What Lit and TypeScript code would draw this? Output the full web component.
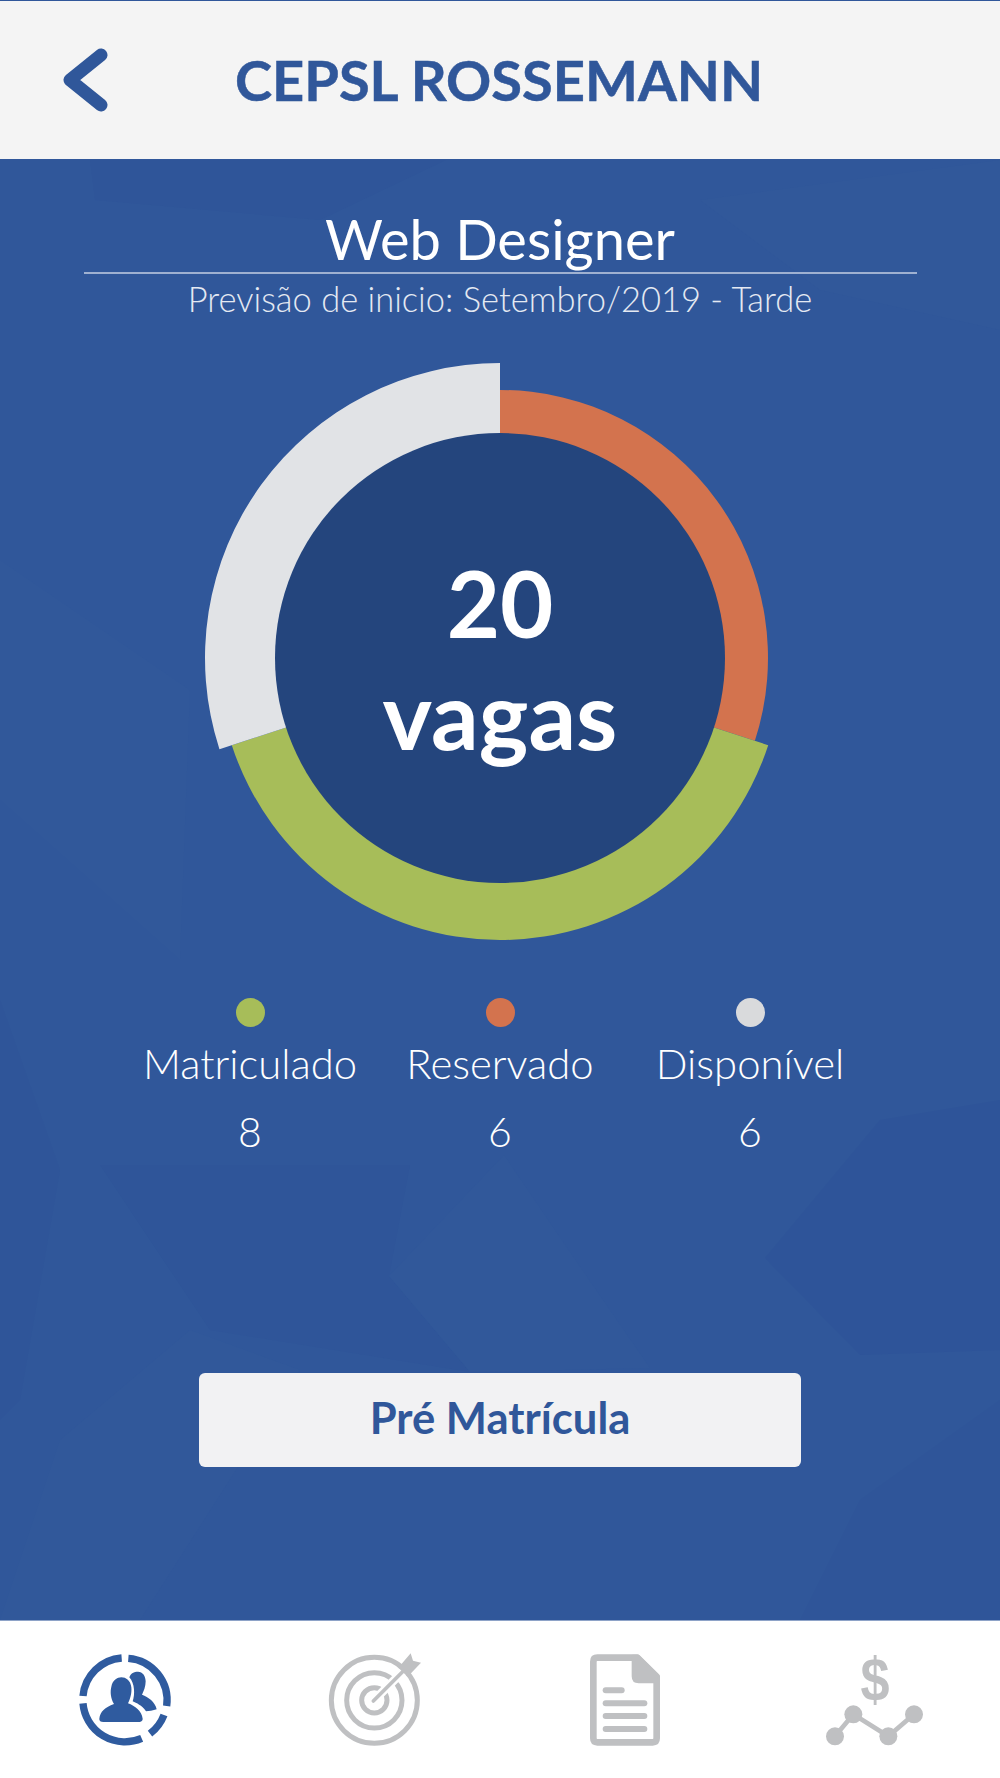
import {LitElement, html, css, svg} from 'lit';
import {customElement, state} from 'lit/decorators.js';

interface Slice {
  label: string;
  value: number;
  color: string;
  dot: string;
  radius: number;
}

const CX = 300;
const CY = 300;

// Clockwise ring slice from the top; angles in degrees, inner radius shared by all.
function slicePath(from: number, to: number, outer: number, inner: number): string {
  const pt = (deg: number, r: number) => {
    const a = ((deg - 90) * Math.PI) / 180;
    return `${(CX + r * Math.cos(a)).toFixed(2)} ${(CY + r * Math.sin(a)).toFixed(2)}`;
  };
  const large = to - from > 180 ? 1 : 0;
  return `M${pt(from, outer)} A${outer} ${outer} 0 ${large} 1 ${pt(to, outer)} L${pt(to, inner)} A${inner} ${inner} 0 ${large} 0 ${pt(from, inner)} Z`;
}

// Faint low-poly facets behind the main panel.
const backdrop: [string, string][] = [
  ['90,160 446,160 320,220 95,200', '#2f5599'],
  ['700,200 1000,160 1000,330 820,290', '#31589a'],
  ['0,560 190,690 180,960 0,800', '#31589a'],
  ['100,1165 410,1165 389,1276 470,1372 210,1330', '#2f5599'],
  ['504,1155 574,1258 650,1368 470,1372 389,1276', '#31589a'],
  ['765,1258 860,1355 1000,1350 1000,1100 880,1120', '#2e5499'],
  ['60,1440 190,1330 300,1370 140,1620 0,1620', '#31589a'],
  ['860,1500 1000,1400 1000,1620 800,1620', '#2f5599'],
  ['0,1000 60,1170 20,1400 0,1420', '#2f5599'],
];

@customElement('app-root')
export class AppRoot extends LitElement {
  static override styles = css`
    :host {
      display: block;
      width: 1000px;
      height: 1778px;
      font-family: Lato, 'Open Sans', sans-serif;
      color: #fff;
      background: #fff;
    }

    .page {
      display: flex;
      flex-direction: column;
      height: 100%;
    }

    header {
      box-sizing: border-box;
      height: 159px;
      flex: none;
      display: flex;
      align-items: center;
      padding-left: 60px;
      background: #f4f4f4;
      border-top: 1px solid #30579a;
      color: #30579a;
    }

    .back {
      width: 50px;
      height: 70px;
      flex: none;
    }

    header h1 {
      margin: 0 0 0 125px;
      font-size: 56px;
      font-weight: 700;
      line-height: 1;
      -webkit-text-stroke: 0.5px #30579a;
    }

    main {
      position: relative;
      flex: 1;
      display: flex;
      flex-direction: column;
      align-items: center;
      background: #30579a;
      overflow: hidden;
    }

    .backdrop {
      position: absolute;
      left: 0;
      top: -159px;
      width: 1000px;
      height: 1620px;
    }

    .heading {
      position: relative;
      width: 833px;
      margin-top: 47px;
      text-align: center;
    }

    .heading h2 {
      margin: 0;
      font-size: 56px;
      font-weight: 400;
      line-height: 66px;
      border-bottom: 2px solid #9fb1d1;
    }

    .heading p {
      margin: 3px 0 0;
      font-size: 34.5px;
      font-weight: 300;
      line-height: 44px;
      color: #e4e9f2;
    }

    .chart {
      position: relative;
      width: 600px;
      height: 600px;
      margin-top: 37px;
    }

    .chart svg {
      display: block;
    }

    .total {
      position: absolute;
      inset: 0;
      display: flex;
      flex-direction: column;
      align-items: center;
      justify-content: center;
      font-size: 92px;
      font-weight: 700;
      line-height: 111px;
    }

    .total .unit {
      font-size: 94px;
    }

    .legend {
      position: relative;
      display: grid;
      grid-template-columns: repeat(3, 250px);
      margin-top: 40px;
      text-align: center;
    }

    .legend .item {
      display: flex;
      flex-direction: column;
      align-items: center;
    }

    .dot {
      width: 29px;
      height: 29px;
      border-radius: 50%;
    }

    .label {
      margin-top: 8px;
      font-size: 41.8px;
      font-weight: 300;
      line-height: 56px;
    }

    .count {
      margin-top: 13px;
      font-size: 41px;
      font-weight: 300;
      line-height: 56px;
    }

    .enroll {
      position: relative;
      box-sizing: border-box;
      width: 602px;
      height: 94px;
      margin-top: 213px;
      padding: 0 0 6px;
      border: none;
      border-radius: 6px;
      background: #f2f2f3;
      color: #30579a;
      font-family: inherit;
      font-size: 43.6px;
      font-weight: 700;
    }

    nav {
      box-sizing: border-box;
      height: 158px;
      flex: none;
      display: grid;
      grid-template-columns: repeat(4, 1fr);
      background: #fff;
      border-top: 1px solid #8ea3c8;
    }

    nav svg {
      display: block;
      width: 100px;
      height: 100px;
    }

    nav svg.tall {
      height: 120px;
    }

    .tab {
      display: flex;
      align-items: center;
      justify-content: center;
    }
  `;

  @state()
  private slices: Slice[] = [
    {label: 'Reservado', value: 6, color: '#d3734e', dot: '#d3734e', radius: 268},
    {label: 'Matriculado', value: 8, color: '#a7bd59', dot: '#a7bd59', radius: 282},
    {label: 'Disponível', value: 6, color: '#e1e3e6', dot: '#d9dadc', radius: 295},
  ];

  private renderChart() {
    const total = this.slices.reduce((sum, s) => sum + s.value, 0);
    let start = 0;
    return html`
      <div class="chart">
        <svg width="600" height="600" viewBox="0 0 600 600">
          ${this.slices.map((s) => {
            const end = start + (s.value / total) * 360;
            const d = slicePath(start, end, s.radius, 200);
            start = end;
            return svg`<path d=${d} fill=${s.color}></path>`;
          })}
          <circle cx=${CX} cy=${CY} r="225" fill="#24457d"></circle>
        </svg>
        <div class="total">
          <span>${total}</span>
          <span class="unit">vagas</span>
        </div>
      </div>
    `;
  }

  private renderLegend() {
    const order = [this.slices[1], this.slices[0], this.slices[2]];
    return html`
      <div class="legend">
        ${order.map(
          (s) => html`
            <div class="item">
              <span class="dot" style="background: ${s.dot}"></span>
              <span class="label">${s.label}</span>
              <span class="count">${s.value}</span>
            </div>
          `
        )}
      </div>
    `;
  }

  override render() {
    return html`
      <div class="page">
        <header>
          <svg class="back" viewBox="0 0 50 70">
            <path
              d="M41 10 L10 35 L41 60"
              fill="none"
              stroke="#30579a"
              stroke-width="13"
              stroke-linecap="round"
              stroke-linejoin="round"
            ></path>
          </svg>
          <h1>CEPSL ROSSEMANN</h1>
        </header>

        <main>
          <svg class="backdrop" viewBox="0 0 1000 1620">
            ${backdrop.map(
              ([points, fill]) => svg`<polygon points=${points} fill=${fill}></polygon>`
            )}
          </svg>
          <div class="heading">
            <h2>Web Designer</h2>
            <p>Previsão de inicio: Setembro/2019 - Tarde</p>
          </div>
          ${this.renderChart()} ${this.renderLegend()}
          <button class="enroll">Pré Matrícula</button>
        </main>

        <nav>
          <div class="tab">
            <svg viewBox="105 90 300 300">
              <g fill="none" stroke="#2f5b9f" stroke-width="22">
                <path d="M265 115 A126 126 0 0 1 380 258"></path>
                <path d="M372 285 A126 126 0 0 1 330 341"></path>
                <path d="M305 355 A126 126 0 0 1 129 250"></path>
                <path d="M129 228 A126 126 0 0 1 245 114"></path>
              </g>
              <path
                fill="#2f5b9f"
                d="M268 172C272 160 282 155 294 155C308 155 317 168 317 184C317 200 311 214 306 224C325 232 345 244 350 268C340 272 325 274 318 274C305 255 290 250 278 244C285 225 285 190 268 172Z"
              ></path>
              <path
                fill="#2f5b9f"
                stroke="#fff"
                stroke-width="4"
                paint-order="stroke"
                d="M178 296C180 275 195 262 222 252C212 235 210 215 214 200C218 180 232 172 244 172C258 172 272 182 274 202C276 220 270 238 264 250C285 258 305 272 308 296C308 304 300 306 295 306L190 306C182 306 177 302 178 296Z"
              ></path>
            </svg>
          </div>
          <div class="tab">
            <svg viewBox="855 92 300 300">
              <g fill="none" stroke="#bfc0c2" stroke-width="15">
                <circle cx="1003" cy="243" r="129"></circle>
                <circle cx="1003" cy="243" r="83"></circle>
                <circle cx="1003" cy="243" r="38"></circle>
              </g>
              <path d="M1000 245 L1150 95" stroke="#fff" stroke-width="26"></path>
              <path d="M1000 245 L1090 155" stroke="#bfc0c2" stroke-width="11" stroke-linecap="round"></path>
              <polygon fill="#bfc0c2" points="1075,145 1112,102 1119,124 1143,130 1103,172"></polygon>
            </svg>
          </div>
          <div class="tab">
            <svg viewBox="105 90 300 300">
              <path
                fill="none"
                stroke="#bfc0c2"
                stroke-width="20"
                stroke-linejoin="round"
                d="M172 113H292L350 170V355Q350 367 338 367H172Q160 367 160 355V125Q160 113 172 113Z"
              ></path>
              <path fill="#bfc0c2" stroke="#bfc0c2" stroke-width="8" stroke-linejoin="round" d="M279 108H294L356 170V186H296Q279 186 279 169Z"></path>
              <g stroke="#bfc0c2" stroke-width="18" stroke-linecap="round">
                <path d="M197 211H245"></path>
                <path d="M197 250H313"></path>
                <path d="M197 288H313"></path>
                <path d="M197 327H313"></path>
              </g>
            </svg>
          </div>
          <div class="tab">
            <svg class="tall" viewBox="855 60 300 360">
              <text
                transform="translate(1005 240) scale(0.86 1)"
                text-anchor="middle"
                font-family="Liberation Sans, sans-serif"
                font-weight="700"
                font-size="182"
                fill="#bfc0c2"
              >$</text>
              <path
                d="M885 349L940 283L1045 349L1122 283"
                fill="none"
                stroke="#bfc0c2"
                stroke-width="14"
              ></path>
              <g fill="#bfc0c2">
                <circle cx="885" cy="349" r="27"></circle>
                <circle cx="940" cy="283" r="27"></circle>
                <circle cx="1045" cy="349" r="27"></circle>
                <circle cx="1122" cy="283" r="27"></circle>
              </g>
            </svg>
          </div>
        </nav>
      </div>
    `;
  }
}

declare global {
  interface HTMLElementTagNameMap {
    'app-root': AppRoot;
  }
}
